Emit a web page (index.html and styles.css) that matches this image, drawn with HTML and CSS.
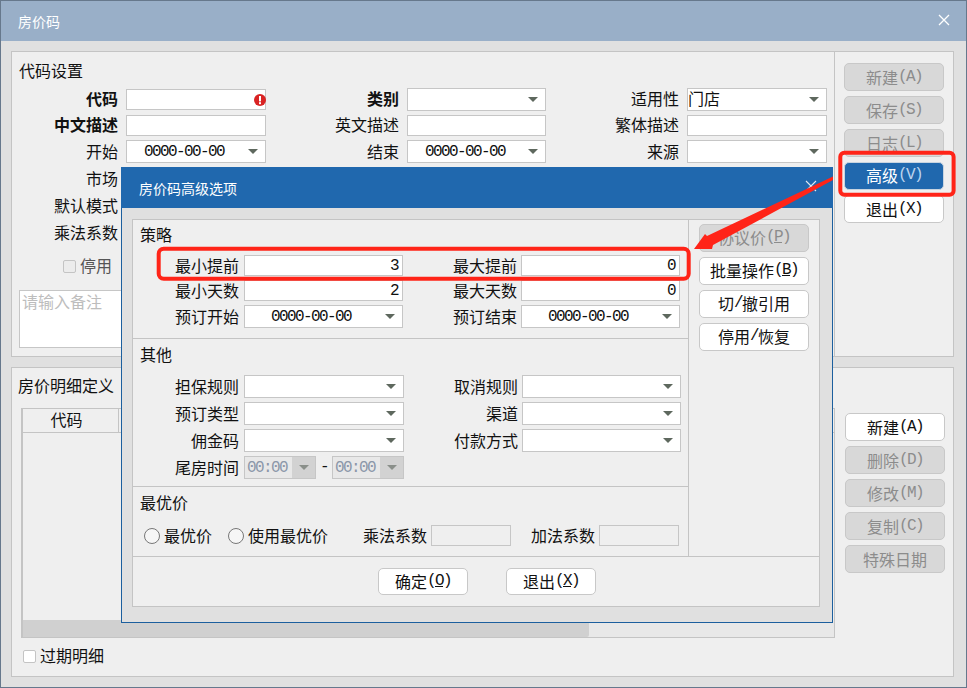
FILE: index.html
```html
<!DOCTYPE html>
<html lang="zh-CN">
<head>
<meta charset="utf-8">
<title>房价码</title>
<link rel="stylesheet" href="styles.css">
</head>
<body>
<div class="window">
  <header class="titlebar">
    <span class="title-text">房价码</span>
    <svg class="close" width="12" height="12" viewBox="0 0 12 12"><path d="M1 1L11 11M11 1L1 11" stroke="#fff" stroke-width="1.3"/></svg>
  </header>
  <main class="win-body">
    <section class="panel panel-top">
      <div class="settings">
        <div class="sec-title">代码设置</div>
        <div class="form-grid">
          <label class="lbl up strong">代码</label>
          <div class="field">
            <svg class="err" width="12" height="12" viewBox="0 0 12 12"><circle cx="6" cy="6" r="6" fill="#d92323"/><rect x="5" y="2" width="2" height="5.4" fill="#fff"/><rect x="5" y="8.2" width="2" height="2" fill="#fff"/></svg>
          </div>
          <label class="lbl up strong">类别</label>
          <div class="field tall select"></div>
          <label class="lbl up">适用性</label>
          <div class="field tall select text-start"><span class="up">门店</span></div>

          <label class="lbl up strong">中文描述</label>
          <div class="field"></div>
          <label class="lbl up">英文描述</label>
          <div class="field"></div>
          <label class="lbl up">繁体描述</label>
          <div class="field"></div>

          <label class="lbl">开始</label>
          <div class="field tall select date"><span class="m">0000-00-00</span></div>
          <label class="lbl">结束</label>
          <div class="field tall select date"><span class="m">0000-00-00</span></div>
          <label class="lbl">来源</label>
          <div class="field tall select"></div>

          <label class="lbl">市场</label>
          <div class="field tall select"></div>
          <span class="blank"></span><span></span><span></span><span></span>

          <label class="lbl">默认模式</label>
          <div class="field tall select"></div>
          <span class="blank"></span><span></span><span></span><span></span>

          <label class="lbl">乘法系数</label>
          <div class="field tall"></div>
          <span class="blank"></span><span></span><span></span><span></span>
        </div>
        <div class="check-row disabled-check">
          <span class="checkbox off"></span><span class="check-text">停用</span>
        </div>
        <div class="memo">请输入备注</div>
      </div>
      <div class="actions">
        <button class="btn off">新建<span class="m">(A)</span></button>
        <button class="btn off">保存<span class="m">(S)</span></button>
        <button class="btn off">日志<span class="m">(L)</span></button>
        <button class="btn primary">高级<span class="m">(V)</span></button>
        <button class="btn">退出<span class="m">(X)</span></button>
      </div>
    </section>

    <section class="panel panel-bottom">
      <div class="detail">
        <div class="sec-title detail-title">房价明细定义</div>
        <div class="table">
          <div class="thead"><div class="th">代码</div></div>
          <div class="tbody"></div>
          <div class="hscroll"><div class="thumb"></div></div>
        </div>
        <div class="check-row expired">
          <span class="checkbox"></span><span class="check-text">过期明细</span>
        </div>
      </div>
      <div class="detail-actions">
        <button class="btn">新建<span class="m">(A)</span></button>
        <button class="btn off">删除<span class="m">(D)</span></button>
        <button class="btn off">修改<span class="m">(M)</span></button>
        <button class="btn off">复制<span class="m">(C)</span></button>
        <button class="btn off">特殊日期</button>
      </div>
    </section>
  </main>

  <div class="modal">
    <header class="modal-title">
      <span class="title-text">房价码高级选项</span>
      <svg class="close modal-close" width="12" height="12" viewBox="0 0 12 12"><path d="M1 1L11 11M11 1L1 11" stroke="#dfe8f2" stroke-width="1.1"/></svg>
    </header>
    <div class="modal-body">
      <div class="modal-panel">
        <div class="modal-upper">
          <div class="modal-main">
            <div class="block block-policy">
              <div class="sec-title">策略</div>
              <div class="mgrid policy-grid">
                <label class="lbl l1">最小提前</label>
                <div class="field num"><span class="m">3</span></div>
                <label class="lbl l2">最大提前</label>
                <div class="field num"><span class="m">0</span></div>
                <label class="lbl l1">最小天数</label>
                <div class="field num"><span class="m">2</span></div>
                <label class="lbl l2">最大天数</label>
                <div class="field num"><span class="m">0</span></div>
                <label class="lbl l1">预订开始</label>
                <div class="field tall select date wide"><span class="m">0000-00-00</span></div>
                <label class="lbl l2">预订结束</label>
                <div class="field tall select date wide"><span class="m">0000-00-00</span></div>
              </div>
            </div>
            <div class="block block-other">
              <div class="sec-title">其他</div>
              <div class="mgrid other-grid">
                <label class="lbl l1">担保规则</label>
                <div class="field tall select"></div>
                <label class="lbl l2">取消规则</label>
                <div class="field tall select"></div>
                <label class="lbl l1">预订类型</label>
                <div class="field tall select"></div>
                <label class="lbl l2">渠道</label>
                <div class="field tall select"></div>
                <label class="lbl l1">佣金码</label>
                <div class="field tall select"></div>
                <label class="lbl l2">付款方式</label>
                <div class="field tall select"></div>
                <label class="lbl l1">尾房时间</label>
                <div class="time-range">
                  <div class="time"><span class="m">00:00</span><span class="time-btn"></span></div>
                  <span class="dash m">-</span>
                  <div class="time"><span class="m">00:00</span><span class="time-btn"></span></div>
                </div>
              </div>
            </div>
            <div class="block block-best">
              <div class="sec-title">最优价</div>
              <div class="best-row">
                <span class="radio"></span><span class="best-a">最优价</span>
                <span class="radio"></span><span class="best-b">使用最优价</span>
                <span class="best-lbl">乘法系数</span><span class="field small"></span>
                <span class="best-lbl second">加法系数</span><span class="field small"></span>
              </div>
            </div>
          </div>
          <div class="modal-side">
            <button class="btn off side">协议价<span class="m">(<u>P</u>)</span></button>
            <button class="btn side">批量操作<span class="m">(<u>B</u>)</span></button>
            <button class="btn side">切<span class="m">/</span>撤引用</button>
            <button class="btn side">停用<span class="m">/</span>恢复</button>
          </div>
        </div>
        <div class="modal-footer">
          <button class="btn foot">确定<span class="m">(<u>O</u>)</span></button>
          <button class="btn foot">退出<span class="m">(<u>X</u>)</span></button>
        </div>
      </div>
    </div>
  </div>

  <svg class="annot" width="967" height="688" viewBox="0 0 967 688">
    <rect x="158.7" y="248.7" width="530" height="30" rx="5" fill="none" stroke="#ff2418" stroke-width="4"/>
    <rect x="840.3" y="152.7" width="113.3" height="42" rx="4" fill="none" stroke="#ff2418" stroke-width="4"/>
    <polygon points="694,249 705,234 707,236 833,176.5 833,180 713,245 712,249" fill="#ff2418"/>
  </svg>
</div>
</body>
</html>
```

FILE: styles.css
```css
* { box-sizing: border-box; }
html, body { margin: 0; padding: 0; }
body {
  width: 967px;
  height: 688px;
  overflow: hidden;
  font: 16px/18px "Noto Sans CJK SC", "Liberation Sans", sans-serif;
  color: #111;
  background: #e0e0e0;
}
.m {
  font-family: "Liberation Mono", "Noto Sans CJK SC", monospace;
  letter-spacing: -1.6px;
}
u { text-underline-offset: 1px; }

.window {
  position: relative;
  width: 967px;
  height: 688px;
  border: 1px solid #66788c;
  background: #e0e0e0;
  display: flex;
  flex-direction: column;
}
.titlebar {
  height: 40px;
  flex: none;
  background: #99afc8;
  display: flex;
  align-items: center;
  justify-content: space-between;
  padding: 0 16px 0 17px;
}
.title-text { font-size: 14px; color: #fff; }
.close { display: block; margin-top: -2px; }

.win-body {
  flex: 1;
  padding: 10px 12px 10px 10px;
  display: flex;
  flex-direction: column;
  gap: 10px;
}
.panel {
  border: 1px solid #c4c4c4;
  background: #efefef;
  display: flex;
}
.panel-top { height: 306px; }
.panel-bottom { height: 310px; }

.sec-title { height: 18px; margin-top: -1px; }

.settings {
  width: 822px;
  flex: none;
  padding: 10px 0 0 7px;
}
.form-grid {
  margin-top: 9px;
  display: grid;
  grid-template-columns: 99px 140px 125px 139px 125px 140px;
  grid-template-rows: 23px 21px repeat(4, 23px);
  column-gap: 8px;
  row-gap: 4px;
  align-items: center;
}
.lbl { text-align: right; white-space: nowrap; padding-bottom: 2px; }
.lbl.up, .up { padding-bottom: 4px; }
.strong { font-weight: 700; }

.field {
  height: 21px;
  background: #fff;
  border: 1px solid #c6c6c6;
  display: flex;
  align-items: center;
  white-space: nowrap;
}
.field.tall { height: 23px; }
.err { margin: 0 -1px 0 auto; }
.select { padding-right: 7px; }
.select::after {
  content: "";
  margin-left: auto;
  border-left: 5px solid transparent;
  border-right: 5px solid transparent;
  border-top: 5px solid #5e685e;
}
.text-start { padding-left: 0; }
.date { padding-left: 17px; }
.date.wide { padding-left: 26px; }
.date .m { padding-top: 1px; }
.num { justify-content: flex-end; padding-right: 4px; }

.check-row { display: flex; align-items: center; gap: 4px; height: 18px; }
.check-text { padding-bottom: 2px; }
.disabled-check { margin: 13px 0 0 44px; color: #555; }
.checkbox {
  width: 13px;
  height: 13px;
  flex: none;
  background: #fff;
  border: 1px solid #c4c4c4;
  border-radius: 2px;
}
.checkbox.off { background: #ececec; }
.memo {
  margin-top: 15px;
  height: 58px;
  width: 808px;
  background: #fff;
  border: 1px solid #c6c6c6;
  padding: 1px 2px;
  color: #bdbdbd;
}

.actions {
  flex: 1;
  border-left: 1px solid #c4c4c4;
  padding: 11px 0 0 9px;
  display: flex;
  flex-direction: column;
  gap: 5px;
}
.btn {
  font: inherit;
  color: #111;
  width: 100px;
  height: 28px;
  padding: 0;
  background: #fff;
  border: 1px solid #c8c8c8;
  border-radius: 5px;
  display: flex;
  align-items: center;
  justify-content: center;
  white-space: nowrap;
}
.btn.off { background: #d8d8d8; color: #8c8c8c; }
.btn.primary { background: #2068ae; border-color: #c8d4e0; color: #fff; padding-bottom: 2px; }
.btn.primary .m { color: #bcd4ee; }

.detail {
  width: 823px;
  flex: none;
  padding: 9px 0 0 6px;
}
.table {
  width: 814px;
  height: 230px;
  margin: 14px 0 0 3px;
  border: 1px solid #c4c4c4;
  border-left-width: 2px;
  display: flex;
  flex-direction: column;
}
.thead { height: 24px; flex: none; border-bottom: 1px solid #c4c4c4; display: flex; }
.th {
  width: 96px;
  border-right: 1px solid #c4c4c4;
  text-align: center;
  padding: 1px 8px 0 0;
}
.tbody { flex: 1; }
.hscroll { height: 17px; flex: none; background: #e8e8e8; }
.thumb { width: 566px; height: 100%; background: #d0d0d0; border-radius: 0 2px 2px 0; }
.expired { margin: 9px 0 0 5px; }

.detail-actions {
  margin-left: 10px;
  padding-top: 45px;
  display: flex;
  flex-direction: column;
  gap: 5px;
}

/* modal dialog */
.modal {
  position: absolute;
  left: 120px;
  top: 166px;
  width: 712px;
  height: 456px;
  background: #e0e0e0;
  border: 1px solid #1c5f9e;
  border-top: 0;
  display: flex;
  flex-direction: column;
}
.modal-title {
  height: 41px;
  flex: none;
  background: #2068ae;
  margin: 0 -1px;
  padding: 0 16px 0 18px;
  display: flex;
  align-items: center;
  justify-content: space-between;
}
.modal-close { margin-top: -4px; }
.modal-body { flex: 1; padding: 11px 12px 15px 10px; display: flex; }
.modal-panel {
  flex: 1;
  border: 1px solid #c4c4c4;
  background: #efefef;
  display: flex;
  flex-direction: column;
}
.modal-upper { display: flex; flex: 1; border-bottom: 1px solid #c4c4c4; }
.modal-main { width: 556px; flex: none; border-right: 1px solid #c4c4c4; display: flex; flex-direction: column; }
.block { padding-left: 7px; }
.block-policy { height: 119px; padding-top: 6px; border-bottom: 1px solid #c4c4c4; }
.block-other { height: 148px; padding-top: 7px; border-bottom: 1px solid #c4c4c4; }
.block-best { flex: 1; padding-top: 7px; }
.mgrid { display: grid; row-gap: 4px; align-items: center; }
.policy-grid {
  margin-top: 12px;
  grid-template-columns: 104px 159px 118px 159px;
  grid-template-rows: 21px 21px 23px;
}
.other-grid {
  margin-top: 12px;
  grid-template-columns: 104px 160px 118px 159px;
  grid-template-rows: repeat(4, 23px);
}
.l1 { padding-right: 5px; }
.l2 { padding-right: 4px; }

.time-range { display: flex; align-items: center; }
.time {
  width: 72px;
  height: 23px;
  background: #e8e8e8;
  border: 1px solid #c6c6c6;
  display: flex;
  align-items: center;
  justify-content: space-between;
  padding-left: 2px;
  color: #8b97a8;
}
.time-btn {
  width: 23px;
  height: 100%;
  background: #d2d2d2;
  display: flex;
  align-items: center;
  justify-content: center;
}
.time-btn::after {
  content: "";
  border-left: 5px solid transparent;
  border-right: 5px solid transparent;
  border-top: 5px solid #8a8f8a;
}
.dash { width: 16px; text-align: center; padding-bottom: 2px; }

.best-row { margin: 14px 0 0 4px; display: flex; align-items: center; height: 21px; }
.radio {
  width: 16px;
  height: 16px;
  flex: none;
  border: 1px solid #777;
  border-radius: 50%;
  background: #f6f6f6;
}
.best-a { margin: 0 16px 0 4px; padding-bottom: 2px; }
.best-b { margin: 0 35px 0 4px; padding-bottom: 2px; }
.best-lbl { margin-right: 4px; padding-bottom: 2px; }
.best-lbl.second { margin-left: 20px; }
.field.small { width: 80px; background: #efefef; }

.modal-side {
  flex: 1;
  padding: 4px 0 0 10px;
  display: flex;
  flex-direction: column;
  gap: 5px;
}
.btn.side { width: 110px; padding-bottom: 2px; }
.modal-footer {
  height: 49px;
  flex: none;
  padding: 11px 0 0 245px;
  display: flex;
  gap: 38px;
}
.btn.foot { width: 90px; height: 27px; padding-bottom: 2px; }

/* red hand-drawn annotation on top of the screenshot */
.annot { position: absolute; left: -1px; top: -1px; pointer-events: none; }
```
